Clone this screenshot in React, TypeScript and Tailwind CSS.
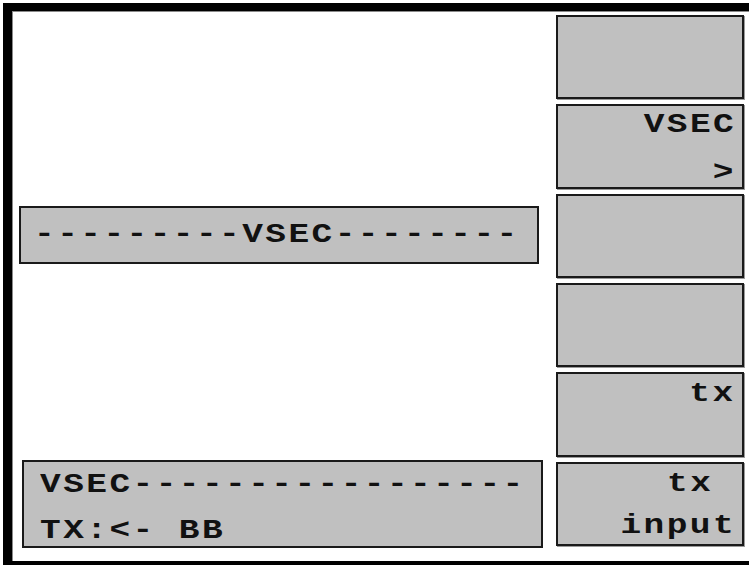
const mono = "inline-block font-['Liberation_Mono','Courier_New',monospace] font-bold text-[28px] tracking-[2px] text-[#111] leading-[28px] whitespace-pre scale-x-[1.23]";

type Key = { lines: string[]; pad: string };

const keys: Key[] = [
  { lines: [], pad: '' },
  { lines: ['VSEC', '>'], pad: 'pt-[5px] pb-0 justify-between' },
  { lines: [], pad: '' },
  { lines: [], pad: '' },
  { lines: ['tx'], pad: 'pt-[6px]' },
  { lines: ['tx ', 'input'], pad: 'pt-[6px] pb-[4px] justify-between' },
];

export default function App() {
  return (
    <div className="h-screen w-full overflow-hidden bg-white pl-[3px] pt-[3px]">
      <div className="h-[562px] border-b-[4px] border-l-[9px] border-t-[8px] border-black">
        <div className="flex h-full border-l border-t border-[#8a8a8a]">
          {/* display area */}
          <div className="flex flex-1 flex-col pl-[6px] pr-[4px]">
            <div className="mt-[194px] flex h-[58px] w-[520px] items-center border-2 border-[#1a1a1a] bg-[#c0c0c0] pl-[13px]">
              <span className={`${mono} origin-left`}>---------VSEC--------</span>
            </div>
            <div className="mb-[13px] ml-[3px] mt-auto flex h-[88px] w-[521px] flex-col items-start justify-center gap-[18px] border-2 border-[#1a1a1a] bg-[#c0c0c0] pl-[16px] pt-[8px]">
              <span className={`${mono} origin-left`}>VSEC-----------------</span>
              <span className={`${mono} origin-left`}>TX:&lt;- BB</span>
            </div>
          </div>

          {/* softkeys */}
          <div className="mr-[5px] mt-[3px] grid h-[531px] w-[188px] grid-rows-6 gap-[5px]">
            {keys.map((k, i) => (
              <div
                key={i}
                className={`flex flex-col items-end border-2 border-[#1a1a1a] bg-[#c0c0c0] pr-[6px] shadow-[1px_1px_0_#9a9a9a] ${k.pad}`}
              >
                {k.lines.map(l => (
                  <span key={l} className={`${mono} origin-right`}>{l}</span>
                ))}
              </div>
            ))}
          </div>
        </div>
      </div>
    </div>
  );
}
